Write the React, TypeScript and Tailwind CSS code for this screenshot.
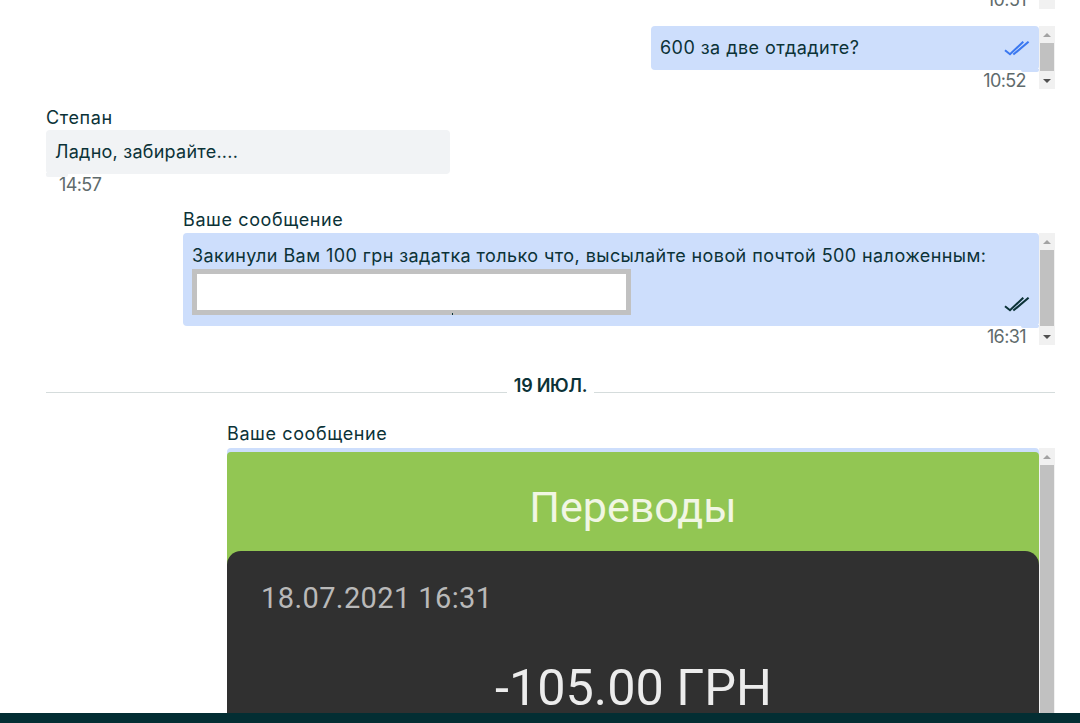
import type { ReactNode } from "react";

const font = "font-['Inter','Noto_Sans',sans-serif]";

function DoubleCheck({ color }: { color: string }) {
  return (
    <svg width="26" height="15" viewBox="0 0 26 15" fill="none" stroke={color} strokeWidth="2" className="absolute right-[9px] bottom-[14px]">
      <path d="M1 9.3L6 13.3L19.3 0.7" />
      <path d="M9.3 13.6L24.6 0.7" />
    </svg>
  );
}

// fake of the browser's classic scrollbar on each message
function Scrollbar({ thumb }: { thumb: string }) {
  return (
    <div className="w-[16px] bg-[#f1f1f1] flex flex-col self-stretch shrink-0 overflow-hidden">
      <div className="h-[17px] shrink-0 flex items-center justify-center">
        <div className="w-0 h-0 border-x-[4px] border-x-transparent border-b-[4px] border-b-[#a3a3a3]" />
      </div>
      <div className={`mx-px bg-[#c1c1c1] ${thumb}`} />
      <div className="flex-1" />
      <div className="h-[17px] shrink-0 flex items-center justify-center">
        <div className="w-0 h-0 border-x-[4px] border-x-transparent border-t-[4px] border-t-[#505050]" />
      </div>
    </div>
  );
}

function Time({ children, className }: { children: ReactNode; className: string }) {
  return <div className={`h-[19px] text-[18px] leading-[22px] tracking-[-0.6px] text-[#5f6b6c] ${className}`}>{children}</div>;
}

export default function App() {
  return (
    <div className={`h-[723px] overflow-hidden flex flex-col bg-white text-[#0b3237] ${font}`}>
      <div className="flex-1 min-h-0 overflow-hidden px-[46px] w-[1055px] box-content">
        <div className="w-[1009px] -mt-[11px]">
          {/* tail of the previous message */}
          <div className="flex justify-end h-[20px]">
            <Time className="mr-[13px]">10:51</Time>
            <Scrollbar thumb="h-0" />
          </div>

          <div className="flex justify-end mt-[17px]">
            <div className="w-[388px]">
              <div className="relative h-[44px] bg-[#cddefc] rounded-[4px] pl-[9px] text-[18px] leading-[44px] tracking-[0.45px]">
                600 за две отдадите?
                <DoubleCheck color="#3b78f0" />
                <div className="absolute right-0 -bottom-[2px] w-[18px] h-[3px] bg-[#cddefc] rounded-b-[2px]" />
              </div>
              <Time className="text-right pr-[13px]">10:52</Time>
            </div>
            <Scrollbar thumb="h-[28px]" />
          </div>

          <div className="text-[18px] leading-[20px] tracking-[0.6px] mt-[19px]">Степан</div>
          <div className="relative w-[404px] h-[44px] mt-[2px] bg-[#f1f3f5] rounded-[4px] pl-[9px] text-[18px] leading-[44px] tracking-[0.25px]">
            Ладно, забирайте....
            <div className="absolute left-0 -bottom-[3px] w-[22px] h-[4px] bg-[#f1f3f5] rounded-b-[2px]" />
          </div>
          <Time className="ml-[13px]">14:57</Time>

          <div className="ml-[137px] text-[18px] leading-[20px] tracking-[0.6px] mt-[17px]">Ваше сообщение</div>
          <div className="flex justify-end mt-[3px]">
            <div className="w-[856px]">
              <div className="relative h-[93px] bg-[#cddefc] rounded-[4px] pl-[9px] pt-[12px] text-[18px] leading-[22px] tracking-[0.42px]">
                Закинули Вам 100 грн задатка только что, высылайте новой почтой 500 наложенным:
                <div className="w-[439px] h-[46px] mt-[2px] bg-white border-[5px] border-[#c1c1c1]" />
                <div className="absolute left-[269px] bottom-[11px] w-px h-[2px] bg-[#0b3237]" />
                <DoubleCheck color="#0b3237" />
                <div className="absolute right-0 -bottom-[2px] w-[18px] h-[3px] bg-[#cddefc] rounded-b-[2px]" />
              </div>
              <Time className="text-right pr-[13px]">16:31</Time>
            </div>
            <Scrollbar thumb="h-[76px]" />
          </div>

          <div className="relative flex justify-center mt-[22px] h-[30px]">
            <div className="absolute left-0 right-0 top-[25px] h-px bg-[#d5dcdc]" />
            <div className="relative bg-white h-[28px] px-[7px] text-[18px] leading-[38px] font-semibold tracking-[-0.25px]">19 ИЮЛ.</div>
          </div>

          <div className="ml-[181px] text-[18px] leading-[20px] tracking-[0.6px] mt-[27px]">Ваше сообщение</div>
          <div className="flex justify-end mt-[4px]">
            <div className="w-[812px] h-[400px] bg-[#cddefc] rounded-t-[4px] pt-[4px]">
              {/* bank screenshot attached to the message */}
              <div className="bg-[#92c653] rounded-t-[4px] font-['Roboto',sans-serif] overflow-hidden">
                <div className="h-[99px] flex items-center justify-center pt-[11px] text-[43px] text-[#f1f6e4]">Переводы</div>
                <div className="h-[300px] bg-[#303030] rounded-t-[14px] pl-[34px] pt-[29px]">
                  <div className="text-[29px] leading-[36px] tracking-[0.4px] text-[#b9b9b9]">18.07.2021 16:31</div>
                  <div className="text-[50.4px] leading-[60px] mt-[42px] pr-[33px] text-center text-[#ececec]">-105.00 ГРН</div>
                </div>
              </div>
            </div>
            <Scrollbar thumb="h-[300px]" />
          </div>
        </div>
      </div>
      <div className="h-[10px] shrink-0 bg-[#032e33]" />
    </div>
  );
}
